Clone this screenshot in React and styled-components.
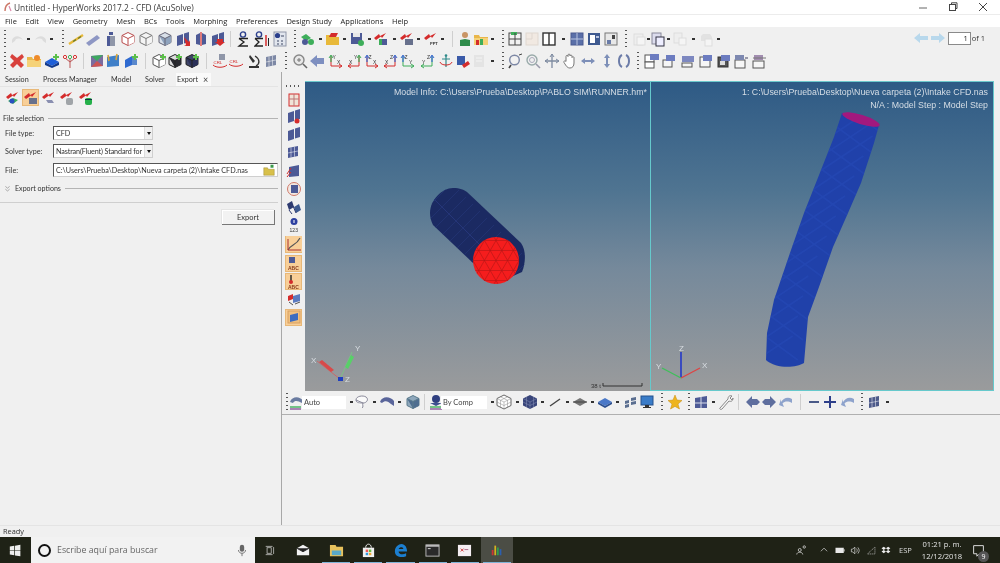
import React from "react";
import styled, { createGlobalStyle } from "styled-components";

const Global = createGlobalStyle`
  html, body { margin: 0; padding: 0; width: 1000px; height: 563px; overflow: hidden; background: #f0f0f0; }
  * { box-sizing: border-box; }
`;

const FONT = `"Open Sans", "Noto Sans", "Liberation Sans", sans-serif`;
const NARROW = `Lato, "Open Sans", "Liberation Sans", sans-serif`;

const Window = styled.div`
  width: 1000px; height: 563px; display: flex; flex-direction: column; overflow: hidden;
  font-family: ${FONT}; font-size: 8px; color: #2a2a2a; background: #f0f0f0; filter: blur(0.3px);
`;
const TitleBar = styled.div`
  height: 15px; flex: none; background: #fff; display: flex; align-items: center; border-bottom: 1px solid #ececec; padding-left: 4px;
`;
const TitleText = styled.span`font-size: 8.4px; color: #3a3a3a; margin-left: 2px; white-space: nowrap;`;
const WinControls = styled.div`margin-left: auto; margin-right: 2px; display: flex; align-items: center;`;
const WinBtn = styled.span`width: 30px; height: 14px; display: flex; align-items: center; justify-content: center;`;
const MenuBar = styled.div`
  height: 12px; flex: none; background: #fff; display: flex; align-items: center; padding-left: 5px; gap: 8.7px; font-size: 7.5px; color: #222;
`;
const MenuItem = styled.span`white-space: nowrap;`;
const ToolRow = styled.div`height: ${p => p.$h || 22}px; flex: none; display: flex; align-items: center; position: relative; padding-top: ${p => p.$nudge || 0}px;`;
const StripBox = styled.div`display: flex; flex-direction: ${p => (p.$col ? "column" : "row")}; align-items: center;`;
const Slot = styled.div`
  flex: none; display: flex; align-items: center; justify-content: center;
  ${p => (p.$col ? `height: ${p.$w}px; width: 20px;` : `width: ${p.$w}px; height: 18px;`)}
`;
const Grip = styled.span`
  display: block; width: 2px; height: 18px;
  background: repeating-linear-gradient(to bottom, #555 0 1.5px, transparent 1.5px 4px);
`;
const GripH = styled.span`
  display: block; width: 16px; height: 2px;
  background: repeating-linear-gradient(to right, #555 0 1.5px, transparent 1.5px 4px);
`;
const Sep = styled.span`display: block; width: 1px; height: 16px; background: #cfcfcf;`;
const DropDot = styled.span`display: block; width: 3px; height: 2px; background: #333;`;
const IconBox = styled.span`
  display: flex; width: 17px; height: 17px; align-items: center; justify-content: center; flex: none;
  background: ${p => (p.$on ? "#f8cf98" : "transparent")};
  box-shadow: ${p => (p.$on ? "inset 0 0 0 1px #e8b878" : "none")};
`;
const Pager = styled.div`
  margin-left: auto; margin-right: 15px; margin-top: -2px; display: flex; align-items: center; font-size: 7.5px; color: #333;
`;
const PagerInput = styled.span`
  width: 23px; height: 13px; background: #fff; border: 1px solid #8a8a8a; text-align: right; padding-right: 2px; line-height: 11px; margin: 0 1px 0 1px; color: #222;
`;

const Main = styled.div`flex: 1; min-height: 0; display: flex;`;
const LeftPanel = styled.div`
  width: 282px; flex: none; border-right: 1px solid #a8a8a8; display: flex; flex-direction: column; background: #f0f0f0; font-family: ${NARROW};
`;
const Tabs = styled.div`height: 14px; flex: none; display: flex; align-items: stretch; font-size: 7.2px; color: #333; padding-top: 1px;`;
const Tab = styled.div`
  display: flex; align-items: center; width: ${p => p.$w}px; padding-left: ${p => p.$pad}px; white-space: nowrap;
  background: ${p => (p.$on ? "#fafafa" : "transparent")};
`;
const TabClose = styled.span`margin-left: 5px; font-size: 9px; color: #444;`;
const PanelBody = styled.div`
  margin-right: 3px; flex: none; height: 117px; border-bottom: 1px solid #cfcfcf; display: flex; flex-direction: column;
`;
const IconRow = styled.div`display: flex; height: 22px; align-items: center; padding-left: 4px; border-top: 1px solid #e4e4e4; gap: 1.3px;`;
const GroupHead = styled.div`
  display: flex; align-items: center; height: 12px; margin-top: ${p => p.$mt}px; gap: 4px; font-size: 7.1px; color: #333; padding-left: ${p => p.$pad}px;
  &::after { content: ""; flex: 1; height: 1px; background: #b4b4b4; }
`;
const FieldRow = styled.div`display: flex; align-items: center; height: 14px; margin-top: ${p => p.$mt}px; padding-left: 5px; font-size: 7.2px;`;
const FieldLabel = styled.label`width: 48px; flex: none; color: #333;`;
const Combo = styled.div`
  width: ${p => p.$w}px; height: 14px; background: #fff; border: 1px solid #cfcfcf; border-top: 1px solid #555; border-left: 1px solid #555;
  display: flex; align-items: center; padding-left: 2px; color: #333; position: relative; white-space: nowrap; overflow: hidden;
`;
const ComboText = styled.span`flex: 1; overflow: hidden; letter-spacing: ${p => (p.$tight ? "-0.12px" : "normal")};`;
const ComboArrow = styled.span`
  width: 8px; height: 12px; flex: none; background: #f0f0f0; border-left: 1px solid #ddd; display: flex; align-items: center; justify-content: center;
  &::after { content: ""; border: 2.5px solid transparent; border-top: 3px solid #111; margin-top: 3px; }
`;
const BtnRow = styled.div`display: flex; justify-content: flex-end; padding: 7px 6px 0 0;`;
const Button = styled.button`
  width: 53px; height: 15px; padding: 0; background: #f2f2f2; border: 0; border-right: 1px solid #777; border-bottom: 1px solid #777;
  box-shadow: inset 1px 1px 0 #fff, -1px -1px 0 #e4e4e4; font: inherit; font-size: 7.5px; color: #333;
`;
const RightArea = styled.div`flex: 1; min-width: 0; display: flex; flex-direction: column; padding-top: 9px;`;
const CanvasRow = styled.div`height: 310px; flex: none; display: flex;`;
const SideTools = styled.div`width: 23px; flex: none; display: flex; flex-direction: column; align-items: center;`;
const Viewports = styled.div`
  width: 689px; flex: none; display: flex; position: relative; border-top: 1px solid #6cc8cc;
`;
const Viewport = styled.div`
  flex: 1 0 ${p => p.$w}px; max-width: ${p => p.$w}px; position: relative; overflow: hidden;
  background: linear-gradient(to bottom, #2e5a85 0%, #4f7491 35%, #75899b 60%, #9a9b9c 100%);
  border: ${p => (p.$active ? "1px solid #66c9cc" : "0")};
  border-top: 0;
`;
const InfoLines = styled.div`
  position: absolute; top: 4px; right: ${p => p.$r}px; text-align: right; color: #d6dee6; font-size: 8.8px; line-height: 13px; white-space: nowrap; font-family: "Liberation Sans", sans-serif;
`;
const Scene = styled.svg`position: absolute; left: 0; top: 0; display: block;`;
const BottomTools = styled.div`height: 22px; flex: none; display: flex; align-items: center; position: relative;`;
const ComboFlat = styled.span`
  display: flex; align-items: center; background: #fff; height: 13px; width: 100%; padding-left: 2px; font-size: 7.5px; color: #444; white-space: nowrap; font-family: ${NARROW};
`;
const BottomPanel = styled.div`flex: 1; border-top: 1px solid #b0b0b0; margin-top: 1px; background: #f0f0f0;`;
const StatusBar = styled.div`height: 12px; flex: none; padding-left: 3px; font-size: 7.4px; color: #333; line-height: 11px; border-top: 1px solid #e4e4e4;`;

const Taskbar = styled.div`
  height: 26px; flex: none; background: #1f2216; display: flex; align-items: stretch; color: #e8e8e8;
`;
const StartBtn = styled.div`width: 31px; flex: none; display: flex; align-items: center; justify-content: center;`;
const SearchBox = styled.div`
  width: 224px; flex: none; background: #f2f2f2; display: flex; align-items: center; padding: 0 6px 0 7px; color: #666; font-size: 8.8px;
`;
const SearchText = styled.span`margin-left: 6px; flex: 1; white-space: nowrap;`;
const TaskApps = styled.div`display: flex; align-items: stretch; margin-left: -1px;`;
const TaskApp = styled.div`
  width: ${p => p.$w || 32.2}px; flex: none; display: flex; align-items: center; justify-content: center; position: relative;
  background: ${p => (p.$active ? "#4b4d45" : "transparent")};
  ${p => p.$open ? `&::after { content: ""; position: absolute; left: 2px; right: 2px; bottom: 0; height: 1.5px; background: #7fb4d8; }` : ""}
`;
const Tray = styled.div`margin-left: auto; padding-right: 9px; display: flex; align-items: center;`;
const TrayItem = styled.div`
  width: ${p => p.$w}px; margin-left: ${p => p.$ml || 0}px; flex: none; display: flex; align-items: center; justify-content: center; position: relative; font-size: 7.5px; color: #ddd;
`;
const Clock = styled.div`
  width: 48px; flex: none; text-align: center; font-size: 7.6px; line-height: 12px; color: #e4e4e4; white-space: nowrap;
`;
const Badge = styled.span`
  position: absolute; left: 12px; top: 7px; width: 11px; height: 11px; border-radius: 50%; background: #555; color: #fff; font-size: 7px; line-height: 11px; text-align: center;
`;

/* ---------- icon drawings ---------- */
const P = "#4d5a96", PL = "#8e97c4", R = "#d42c2c", G = "#3eae5a", Y = "#e8b93a", GR = "#8f96a8", LT = "#dcdcdc", B = "#3a6ad0";
const cube = (s, f, f2) => (
  <>
    <path d="M8 1.5 14 4.5V11.5L8 14.5 2 11.5V4.5Z" fill={f} stroke={s} />
    <path d="M2 4.5 8 7.5 14 4.5V11.5L8 14.5Z" fill={f2 || f} />
    <path d="M2 4.5 8 7.5 14 4.5M8 7.5V14.5" fill="none" stroke={s} />
  </>
);
const plus = <path d="M11 1h2v2h2v2h-2v2h-2V5H9V3h2z" fill="#5cbf4a" />;
const red = <path d="M1 7 6 3 7 5 13 2 9 7 8 5.5 3 9Z" fill={R} />;
const panel = f => <path d="M2 5 8 3V13L2 15ZM9 2.5 14 1V11L9 12.5Z" fill={f} />;
const mesh3 = c => <><path d="M2 4 12 2V12L2 14Z" fill={c} /><path d="M5 3.5V13.4M8.5 2.8V12.7M2 9 12 7" stroke="#fff" strokeWidth=".5" /></>;
const Tiny = ({ x, y, c = "#333", s = 5, w = 400, children }) => (
  <text x={x} y={y} fontSize={s} fontWeight={w} fill={c} fontFamily="Liberation Sans, sans-serif">{children}</text>
);
const axis = (flip, up, right, a, b) => (
  <>
    <path d={flip ? "M13 3V13H2" : "M3 3V13H14"} fill="none" stroke={right} />
    <path d={flip ? "M13 3V9" : "M3 3V9"} stroke={up} strokeWidth="1.2" />
    <path d={flip ? "M11 5 13 2 15 5" : "M1 5 3 2 5 5"} fill="none" stroke={up} />
    <path d={flip ? "M5 11 2 13 5 15" : "M11 11 14 13 11 15"} fill="none" stroke={right} />
    <Tiny x={flip ? 8 : 4.5} y="6">{a}</Tiny>
    <Tiny x={flip ? 3 : 9} y="11">{b}</Tiny>
  </>
);
const folderIc = (
  <>
    <path d="M1 4h5l1 2h8v8H1z" fill="#e9b64a" />
    <path d="M1 7h14v7H1z" fill="#f5d278" />
  </>
);
const Icons = {
  undo: <path d="M3 9C5 4 11 4 14 9 10 7 7 7 6 10L3 12Z" fill={LT} />,
  redo: <path d="M13 9C11 4 5 4 2 9 6 7 9 7 10 10L13 12Z" fill={LT} />,
  lineY: <><path d="M1 13 15 4" stroke={Y} strokeWidth="2.4" /><path d="M5 10.5 8 8.7M10 7.5 13 5.5" stroke="#6a7a2a" strokeWidth="1.4" /></>,
  cyl: <path d="M1 12 12 4 15 7 4 15Z" fill={PL} />,
  bottle: <><rect x="6" y="1" width="4" height="3" fill={P} /><path d="M4 5h8v10H4z" fill={GR} /><path d="M4 5h3v10H4z" fill={P} /></>,
  cubeR: cube("#b84a4a", "#fff"),
  cubeG: cube("#777", "#f4f4f4"),
  cubeS: cube("#667", "#d8dfe8", "#8fa3bd"),
  faceR: <>{panel(P)}<path d="M9 6 14 11 15 9V15H9L11 14Z" fill={R} /></>,
  split: <><path d="M3 4 7 2V14L3 13Z" fill={P} /><path d="M9 2 13 4V13L9 14Z" fill={P} /><path d="M8 1V15" stroke={R} strokeWidth="1.2" /></>,
  faceD: <>{panel(P)}<path d="M7 8h6v3h2l-5 4-5-4h2z" fill={R} /></>,
  sigma: <><circle cx="7" cy="3.5" r="2.6" fill="none" stroke="#2b3f8c" strokeWidth="1.4" /><path d="M3 7.5H12M3 7.5 8 11 3 15H12" fill="none" stroke="#222" strokeWidth="1.3" /></>,
  sigma2: <><circle cx="5" cy="3.5" r="2.6" fill="none" stroke="#2b3f8c" strokeWidth="1.4" /><path d="M1 7.5H9M1 7.5 5 11 1 15H9" fill="none" stroke="#222" strokeWidth="1.3" /><path d="M12 4V15" stroke={R} strokeWidth="1.5" /><path d="M14.5 7V15" stroke="#222" /></>,
  calc: <><rect x="2" y="1" width="12" height="14" fill="#e2e6ee" stroke={GR} /><circle cx="5.5" cy="4.5" r="2.6" fill="#2b3f8c" /><path d="M5 9h2v2H5zM9 9h2v2H9zM5 12h2v2H5zM9 12h2v2H9zM9 4h3v2H9z" fill={GR} /></>,
  impC: <><path d="M1 6 6 3 11 7 6 10Z" fill={G} /><circle cx="5" cy="11" r="3" fill={P} /><circle cx="11" cy="11" r="3" fill={G} /></>,
  impF: <><path d="M2 4h6l1 2h6v8H2z" fill={Y} /><path d="M7 2h7l-2 4H5z" fill={R} /></>,
  save: <><rect x="2" y="2" width="11" height="11" fill={P} /><rect x="4" y="2" width="7" height="4" fill="#e8e8e8" /><circle cx="12" cy="12" r="3" fill={G} /></>,
  expA: <>{red}<path d="M3 11 8 8 13 10 8 14Z" fill={G} /><circle cx="7" cy="11" r="2.5" fill="#2a50c0" /></>,
  expB: <>{red}<path d="M6 8h8v6H6z" fill="#67708c" /></>,
  expC: <>{red}<path d="M5 10h6l2 3H7z" fill="#8a8fb0" /></>,
  expD: <>{red}<rect x="7" y="8" width="7" height="7" rx="2" fill="#a0a4a8" /></>,
  expE: <>{red}<rect x="7" y="8" width="7" height="7" rx="2" fill="#25b04a" /><path d="M7 9.5H14" stroke="#134" /></>,
  expG: <>{red}<path d="M6 8h8v6H6z" fill={G} /><path d="M9 8h5v6H9z" fill={P} /></>,
  expH: <>{red}<Tiny x="7" y="14" s={4} w={700}>PPT</Tiny></>,
  person: <><circle cx="8" cy="4" r="3" fill="#c99566" /><path d="M3 15V9L8 8 13 9V15Z" fill="#2e8b4a" /></>,
  folderC: <>{folderIc}<path d="M3 9h3v5H3z" fill={R} /><path d="M7 8h3v6H7z" fill={G} /></>,
  winT: <><rect x="2" y="2" width="12" height="12" fill="#f2f2f2" stroke="#444" /><rect x="4" y="1" width="6" height="3" fill={G} /><path d="M8 2v12M2 8h12" stroke="#444" /></>,
  gridG: <><rect x="2" y="2" width="12" height="12" fill="#f1e9e2" stroke="#dfd7d0" /><path d="M8 2v6H2" stroke="#dfd7d0" fill="none" /></>,
  win2: <><rect x="2" y="2" width="12" height="12" fill="#fff" stroke="#333" strokeWidth="1.4" /><path d="M8 2v12" stroke="#333" strokeWidth="1.4" /></>,
  win4: <><rect x="2" y="2" width="12" height="12" fill="#5a6fa8" stroke="#4a5a90" /><path d="M8 2v12M2 8h12" stroke="#b8c4e0" /></>,
  winS: <><rect x="2" y="2" width="12" height="12" fill="#3f5a90" /><rect x="4" y="4" width="5" height="8" fill="#fff" /><rect x="10" y="5" width="3" height="2" fill="#b8c4e0" /></>,
  winQ: <><rect x="2" y="2" width="12" height="12" fill="#e8e8e8" stroke="#777" /><path d="M4 9h4v4H4z" fill="#6a7ca8" /><path d="M9 4h3v4H9z" fill="#444" /></>,
  pgA: <><rect x="3" y="3" width="9" height="11" fill="#eee" stroke="#ddd" /><rect x="6" y="6" width="8" height="8" fill="#f5f5f5" stroke="#ddd" /></>,
  pgB: <><rect x="2" y="2" width="9" height="11" fill="#dde" stroke="#889" /><rect x="6" y="6" width="8" height="9" fill="#eef" stroke="#334" /></>,
  pgC: <><rect x="2" y="2" width="8" height="10" fill="#eee" stroke="#ddd" /><rect x="7" y="7" width="7" height="7" fill="#f5f5f5" stroke="#ddd" /></>,
  pgD: <><path d="M5 3h7l2 3v4H3V5z" fill="#e2e2e2" /><rect x="7" y="8" width="7" height="7" fill="#f5f5f5" stroke="#ddd" /></>,
  xRed: <path d="M3 1 8 5 13 1 15 4 11 8 15 12 12 15 8 11 4 15 1 12 5 8 1 4Z" fill="#d8413c" />,
  folderO: <>{folderIc}<circle cx="11" cy="5" r="3" fill="#ee8b2a" /></>,
  folderF: <><path d="M1 5h5l1 2h8v8H1z" fill="#d8c04a" stroke="#8a7a20" strokeWidth=".5" /><path d="M10 1h4v4h-4z" fill="#3a9a4a" /></>,
  cubeB: <><path d="M1 9 8 5 15 9 8 13Z" fill="#1f5fd8" /><path d="M1 9V12L8 15 15 12V9L8 13Z" fill="#143a8c" />{plus}</>,
  tree: <><path d="M8 6V15M8 9 3 5M8 9 13 5" fill="none" stroke="#b55" /><circle cx="3" cy="4" r="1.6" fill="#fff" stroke={R} /><circle cx="13" cy="4" r="1.6" fill="#fff" stroke={R} /><circle cx="8" cy="4" r="1.6" fill="#fff" stroke={G} /></>,
  m1: <><path d="M2 3 14 2V13L2 14Z" fill="#7a6ca0" /><path d="M2 3 8 8 14 2" fill="#3ea860" /><path d="M2 14 8 8 14 13Z" fill="#c55" /></>,
  m2: <><path d="M2 4 14 2V13L2 14Z" fill="#3f7fc8" /><path d="M3 2 4 8M12 1 11 7" stroke="#d8a53a" strokeWidth="1.6" /></>,
  m3: <><path d="M2 7 9 3V12L2 15Z" fill="#2f6ad0" /><path d="M9 3 14 6V12L9 12Z" fill="#5a88cc" />{plus}</>,
  cubeP: <>{cube("#555", "#fff")}{plus}</>,
  cubeQ: <>{cube("#222", "#ddd", "#2a2a30")}{plus}</>,
  cubeD: <>{cube("#222", "#3e4468", "#2a3058")}{plus}</>,
  crl1: <><rect x="7" y="1" width="6" height="6" fill={GR} /><Tiny x="1.5" y="11" c={R} s={4.4}>CRL</Tiny><path d="M1 12C4 15 12 15 15 12" fill="none" stroke={R} /></>,
  crl2: <><Tiny x="1.5" y="10" c={R} s={4.4}>CRL</Tiny><path d="M1 11C4 14 12 14 15 11" fill="none" stroke={R} /></>,
  scope: <><path d="M4 2 9 8 7 10 3 4Z" fill="#333" /><path d="M9 3C14 6 14 11 10 13" fill="none" stroke="#333" strokeWidth="1.4" /><path d="M3 14H13" stroke="#333" strokeWidth="2" /></>,
  meshG: mesh3("#7d88a5"),
  zoomG: <><circle cx="7" cy="7" r="5" fill="#e8e8e8" stroke="#888" strokeWidth="1.4" /><path d="M11 11 15 15" stroke="#666" strokeWidth="1.6" /><path d="M5 7h4M7 5v4" stroke="#777" /></>,
  arrowLB: <path d="M1 8 8 2V5H15V11H8V14Z" fill="#7e8fc0" />,
  axYX: axis(false, G, R, "Y", "X"),
  axXY: axis(true, G, R, "Y", "X"),
  axZX: axis(false, B, R, "Z", "X"),
  axXZ: axis(true, B, R, "Z", "X"),
  axZY: axis(false, B, G, "Z", "Y"),
  axYZ: axis(true, B, G, "Z", "Y"),
  anchor: <><path d="M8 3V14M4 6H12" stroke="#2f8a8a" strokeWidth="1.2" /><path d="M2 9C3 13 13 13 14 9" fill="none" stroke={R} /><circle cx="8" cy="2.5" r="1.3" fill="#2f8a8a" /></>,
  flagB: <><path d="M2 3H10V12H2Z" fill="#3a5aa8" /><path d="M7 12 13 8 15 11 9 15Z" fill={R} /></>,
  pgG: <><rect x="3" y="2" width="10" height="12" fill="#e4e4e4" /><path d="M5 5h6M5 8h6" stroke="#f4f4f4" /></>,
  zoomB: <><circle cx="6.5" cy="7" r="4.8" fill="#f2f2f2" stroke="#7d88a5" strokeWidth="1.4" /><path d="M3 12 1 15" stroke="#444" strokeWidth="1.6" /><path d="M11 2 14 1" stroke="#444" /></>,
  zoomC: <><circle cx="7" cy="7" r="5" fill="#f0f0f0" stroke="#9aa" strokeWidth="1.4" /><circle cx="7" cy="7" r="2.5" fill="none" stroke="#aab" /><path d="M11 11 15 15" stroke="#99a" strokeWidth="1.6" /></>,
  cross: <><path d="M8 1V15M1 8H15" stroke="#7d8aa0" strokeWidth="1.3" /><path d="M8 1 6 4M8 1l2 3M1 8l3-2M1 8l3 2M15 8l-3-2M15 8l-3 2" stroke="#7d8aa0" fill="none" /></>,
  hand: <path d="M4 7V3.5C4 2 6 2 6 3.5V2C6 .8 8 .8 8 2V3C8 1.8 10 1.8 10 3V4.5C10 3.5 12 3.5 12 4.5V10C12 13 10.5 15 8 15 5.5 15 4.5 13.5 2 9.5 1.5 8 3 7 4 8.5Z" fill="#fff" stroke="#777" />,
  arrH: <path d="M1 8 5 5V7H11V5L15 8 11 11V9H5V11Z" fill="#7d8fb8" />,
  arrV: <path d="M8 1 11 5H9V11H11L8 15 5 11H7V5H5Z" fill="#7d8fb8" />,
  rot: <><path d="M6 2C2 4 2 12 6 14" fill="none" stroke="#6c7ca8" strokeWidth="2" /><path d="M10 2C14 4 14 12 10 14" fill="none" stroke="#6c7ca8" strokeWidth="2" /></>,
  vA: <><rect x="1" y="2" width="9" height="7" fill="#fff" stroke="#555" /><rect x="6" y="1" width="9" height="6" fill="#6c7cc0" /><rect x="1" y="9" width="9" height="6" fill="#fff" stroke="#555" /></>,
  vB: <><rect x="2" y="7" width="9" height="7" fill="#f6f6f6" stroke="#555" /><rect x="5" y="2" width="9" height="6" fill="#6c7cc0" /></>,
  vC: <><rect x="2" y="3" width="12" height="6" fill="#7d88c0" /><rect x="2" y="10" width="10" height="4" fill="#f6f6f6" stroke="#555" /></>,
  vD: <><rect x="2" y="4" width="10" height="10" fill="#f6f6f6" stroke="#555" /><rect x="5" y="2" width="9" height="6" fill="#6c7cc0" /></>,
  vE: <><rect x="2" y="4" width="10" height="10" fill="#555" stroke="#333" /><rect x="5" y="2" width="9" height="6" fill="#6c7cc0" /><rect x="4" y="8" width="5" height="4" fill="#ddd" /></>,
  vF: <><rect x="2" y="7" width="10" height="8" fill="#f6f6f6" stroke="#555" /><rect x="2" y="2" width="9" height="5" fill="#7d88b0" /><path d="M12 4h3v2h-3z" fill="#99a" /></>,
  vG: <><rect x="2" y="8" width="11" height="7" fill="#f6f6f6" stroke="#555" /><rect x="3" y="2" width="9" height="5" fill="#a28db0" /><path d="M2 5H15" stroke="#777" /></>,
  arrBlueL: <path d="M1 8 7 3V6H15V10H7V13Z" fill="#b8d8ec" />,
  arrBlueR: <path d="M15 8 9 3V6H1V10H9V13Z" fill="#b8d8ec" />,
  sd1: <><rect x="3" y="2" width="10" height="12" fill="#f0e4d8" stroke={R} /><path d="M3 7H13M8 2V14" stroke="#b77" /></>,
  sd2: <>{panel(P)}<circle cx="11" cy="13" r="2.5" fill={R} /></>,
  sd3: <>{panel(P)}</>,
  sd4: <>{mesh3(P)}</>,
  sd5: <><path d="M3 4 13 2V13L3 14Z" fill={P} /><path d="M1 11 5 5M1 14l4-5" stroke={R} /></>,
  sd6: <><circle cx="8" cy="8" r="6.5" fill="#f2e8e2" stroke="#d07a6a" /><rect x="5" y="4" width="7" height="8" fill={P} /></>,
  sd7: <><path d="M1 5 6 2 8 8 3 11Z" fill="#2e3a70" /><path d="M8 8 13 5 15 11 10 14Z" fill="#3e5a90" /><path d="M3 11 6 15M10 14 7 7" stroke="#2e3a70" /></>,
  info: <><circle cx="8" cy="4.5" r="3.5" fill="#2c3fa0" /><path d="M8 3V6" stroke="#fff" /><Tiny x="3.6" y="14.5" s={5}>123</Tiny></>,
  curve: <><rect width="16" height="16" fill="#f8cf98" /><path d="M2 14C5 8 10 10 14 2" fill="none" stroke="#555" strokeWidth="1.2" /><path d="M2 3V14H15" fill="none" stroke="#a33" /></>,
  abcA: <><rect x="3" y="2" width="6" height="6" fill={P} /><Tiny x="2" y="14.5" c="#8a3a1a" s={5} w={700}>ABC</Tiny></>,
  abcB: <><path d="M5 1V8" stroke="#222" strokeWidth="1.4" /><circle cx="5" cy="8" r="2" fill={R} /><Tiny x="2" y="14.5" c="#8a3a1a" s={5} w={700}>ABC</Tiny></>,
  ctr: <><path d="M2 5 7 3V8L2 10Z" fill={R} /><path d="M7 5 14 3V10L7 12Z" fill="#5a7ac0" /><path d="M3 11 7 14M9 13 14 11" stroke="#555" /></>,
  planeO: <><rect x="2" y="2" width="12" height="12" fill="#f0c080" stroke="#d8a060" /><path d="M4 6 12 4V11L4 13Z" fill="#3c6cc0" /></>,
  auto: <><path d="M1 8C3 2 11 2 14 7L13 9C9 7 6 6 4 9Z" fill="#6a7ba0" /><path d="M1 13H12" stroke={G} strokeWidth="1.4" /><path d="M1 15H12" stroke="#7a3a8a" strokeWidth="1.2" /></>,
  lasso: <path d="M1 6C1 2 8 1 11 3 14 5 12 9 8 9 7 11 9 13 7 14M8 9C5 9 1 9 1 6Z" fill="#fafafa" stroke="#889" />,
  surf: <path d="M1 8C3 2 11 2 15 7V12L12 10C9 7 6 6 3 9Z" fill="#59659a" />,
  cubeF: cube("#5a7a8c", "#8fa8bc", "#4f6e90"),
  byComp: <><circle cx="8" cy="5" r="4" fill="#2f3f80" /><path d="M2 9H14L8 12Z" fill="#3f5090" /><path d="M2 13H14" stroke={G} strokeWidth="1.4" /><path d="M2 15H14" stroke="#7a3a8a" strokeWidth="1.2" /></>,
  cubeW: <><path d="M8 1 15 4.5V11.5L8 15 1 11.5V4.5Z" fill="#fff" stroke="#666" /><path d="M1 4.5 8 8 15 4.5M8 8V15M4.5 2.8 11.5 6.3M11.5 2.8 4.5 6.3M4.5 6.3V13M11.5 6.3V13M1 8 8 11.5 15 8" fill="none" stroke="#888" strokeWidth=".5" /></>,
  cubeK: <><path d="M8 1 15 4.5V11.5L8 15 1 11.5V4.5Z" fill="#39457a" /><path d="M1 4.5 8 8 15 4.5M8 8V15M1 8 8 11.5 15 8M4.5 3V13M11.5 3V13" fill="none" stroke="#8a94b8" strokeWidth=".5" /></>,
  lineK: <path d="M3 12 13 5" stroke="#444" strokeWidth="1.4" />,
  planeK: <><path d="M1 8 8 4 15 8 8 12Z" fill="#757575" /><path d="M1 8H15" stroke="#444" /></>,
  diamond: <><path d="M1 8 8 4 15 8 8 12Z" fill="#4a78c8" /><path d="M1 8V10L8 14 15 10V8L8 12Z" fill="#2b4f90" /></>,
  tiles: <path d="M2 7 6 6V9L2 10ZM2 11 6 10V13L2 14ZM8 4 13 3V6L8 7ZM8 8 13 7V10L8 11Z" fill="#5a6e90" />,
  monitor: <><rect x="2" y="2" width="12" height="9" fill="#3a7cc8" stroke="#24508c" /><path d="M6 11h4v2h2v1H4v-1h2z" fill="#333" /></>,
  star: <path d="M8 1 10 6 15 6.5 11 10 12.5 15 8 12.4 3.5 15 5 10 1 6.5 6 6Z" fill="#eeb41e" stroke="#c48a10" strokeWidth=".5" />,
  winB: <><path d="M2 4 14 2V14L2 14Z" fill="#4d5a96" /><path d="M8 3V14M2 9H14" stroke="#d8dcea" /></>,
  wrench: <path d="M2 14 10 5C10 3 11 1 14 2L12 4 14 6 15 4C15 7 13 8 11 7L4 15C3 16 1 15 2 14Z" fill="#f4f4f4" stroke="#888" />,
  arrLP: <path d="M1 8 7 2V5H12L15 8 12 11H7V14Z" fill="#5e6e9e" />,
  arrRP: <path d="M15 8 9 2V5H4L1 8 4 11H9V14Z" fill="#5e6e9e" />,
  curveB: <path d="M14 5C9 2 5 5 3 8V5L1 11 6 13 4.5 9.5C7 7 10 7 14 9Z" fill="#8ea3cc" />,
  minus: <path d="M3 7H13V9H3Z" fill="#4a5a88" />,
  plusB: <path d="M7 2H9V7H14V9H9V14H7V9H2V7H7Z" fill="#2d3f8a" />,
  meshB: mesh3("#4d5a8a"),
};

const Ic = ({ n, s = 16, on }) => (
  <IconBox $on={on}>
    <svg width={s} height={s} viewBox="0 0 16 16" strokeWidth="1">{Icons[n]}</svg>
  </IconBox>
);

function sizes(items, start) {
  const edge = i => {
    const [, c, o] = items[i];
    const next = items[i + 1];
    if (o && o.w) return c + o.w / 2;
    if (next[2] && next[2].w) return next[1] - next[2].w / 2;
    return (c + next[1]) / 2;
  };
  return items.map(([, c], i) => {
    const a = i === 0 ? start : edge(i - 1);
    const b = i === items.length - 1 ? c + (c - a) : edge(i);
    return b - a;
  });
}
const Strip = ({ items, start, col }) => {
  const w = sizes(items, start);
  return (
    <StripBox $col={col}>
      {items.map(([n, , o], i) => (
        <Slot key={i} $w={w[i]} $col={col}>
          {n === "grip" ? (col ? <GripH /> : <Grip />) : n === "sep" ? <Sep /> : n === "dot" ? <DropDot /> : o && o.text ? <ComboFlat>{o.text}</ComboFlat> : <Ic n={n} on={o && o.on} />}
        </Slot>
      ))}
    </StripBox>
  );
};

const row1 = [["grip",4],["undo",17],["dot",28],["redo",41],["dot",52],["grip",62],["lineY",74],["cyl",93],["bottle",111],["cubeR",128],["cubeG",146],["cubeS",165],["faceR",183],["split",201],["faceD",220],["sep",231],["sigma",241],["sigma2",262],["calc",281],["grip",295],["impC",308],["dot",320],["impF",332],["dot",344],["save",357],["dot",369],["expG",381],["dot",394],["expB",407],["dot",418],["expH",432],["dot",443],["sep",451],["person",463],["folderC",483],["dot",493],["grip",502],["winT",513],["gridG",533],["win2",550],["dot",563],["win4",576],["winS",593],["winQ",613],["grip",626],["pgA",640],["dot",648],["pgB",658],["dot",668],["pgC",680],["dot",693],["pgD",707],["dot",718]];
const row2 = [["grip",4],["xRed",16],["folderO",33],["cubeB",52],["tree",71],["sep",84],["m1",95],["m2",113],["m3",132],["sep",146],["cubeP",157],["cubeQ",175],["cubeD",193],["sep",206],["crl1",219],["crl2",236],["scope",254],["meshG",273],["grip",287],["zoomG",298],["arrowLB",317],["axYX",335],["axXY",355],["axZX",372],["axXZ",390],["axZY",408],["axYZ",427],["anchor",447],["flagB",463],["pgG",480],["dot",493],["grip",502],["zoomB",515],["zoomC",533],["cross",552],["hand",570],["arrH",588],["arrV",607],["rot",625],["grip",638],["vA",650],["vB",668],["vC",688],["vD",706],["vE",724],["vF",741],["vG",759]];
const side = [["grip",3],["sd1",18],["sd2",35],["sd3",53],["sd4",71],["sd5",90],["sd6",108],["sd7",126],["info",144],["curve",163,{on:true}],["abcA",182,{on:true}],["abcB",201,{on:true}],["ctr",218],["planeO",236,{on:true}]];
const bottom = [["grip",287],["auto",297],["Auto",325,{text:"Auto",w:44}],["dot",350],["lasso",364],["dot",376],["surf",387],["dot",401],["cubeF",413],["sep",427],["byComp",435],["By Comp",465,{text:"By Comp",w:46}],["dot",491],["cubeW",505],["dot",519],["cubeK",530],["dot",544],["lineK",555],["dot",569],["planeK",580],["dot",594],["diamond",605],["dot",618],["tiles",631],["monitor",649],["grip",663],["star",676],["grip",690],["winB",702],["dot",715],["wrench",727],["sep",740],["arrLP",752],["arrRP",770],["curveB",789],["sep",801],["minus",813],["plusB",831],["curveB",850],["grip",863],["meshB",876],["dot",888]];

function capLines() {
  const out = [];
  const cx = 496, cy = 260.5, r = 23.5;
  const step = 11.5;
  for (let k = -3; k <= 3; k++) {
    const d = k * step * 0.87;
    [0, 60, 120].forEach(a => {
      const t = (a * Math.PI) / 180;
      const nx = -Math.sin(t), ny = Math.cos(t);
      const h = Math.sqrt(Math.max(0, r * r - d * d));
      if (h > 0) out.push(`M${cx + nx * d - Math.cos(t) * h} ${cy + ny * d - Math.sin(t) * h}L${cx + nx * d + Math.cos(t) * h} ${cy + ny * d + Math.sin(t) * h}`);
    });
  }
  return out.join("");
}
function runnerMesh() {
  const out = [];
  for (let i = -2; i < 14; i++) {
    const x = 425 + i * 7, y = 190 + i * 7;
    out.push(`M${x} ${y + 34}L${x + 34} ${y}M${x} ${y}L${x + 40} ${y + 40}`);
  }
  return out.join("");
}
const RUNNER = "M430 213C430 200 442 188 453 188 460 188 464 190 467 192L521 243C526 250 526 262 522 272L500 282 473 263 433 225C431 221 430 217 430 213Z";

const LeftScene = () => (
  <Scene width="344" height="309" viewBox="305 82 344 309">
    <clipPath id="runner"><path d={RUNNER} /></clipPath>
    <path d={RUNNER} fill="#1b2a62" />
    <path d={runnerMesh()} stroke="#26387a" strokeWidth=".6" fill="none" clipPath="url(#runner)" />
    <ellipse cx="496" cy="260.5" rx="23" ry="23.5" fill="#f51d1d" />
    <clipPath id="cap"><ellipse cx="496" cy="260.5" rx="23" ry="23.5" /></clipPath>
    <path d={capLines()} stroke="#b01818" strokeWidth=".6" clipPath="url(#cap)" />
    <path d="M340 379 317 361" stroke="#c86a6a" />
    <path d="M331 372 319 362 322 360 334 370Z" fill="#d84a4a" />
    <path d="M340 379 352 352" stroke="#7cc088" />
    <path d="M345 367 351 355 354 357 348 369Z" fill="#58d068" />
    <rect x="338" y="377" width="5" height="4" fill="#1f3fc0" />
    <g fill="#d8dde2" fontSize="8" fontFamily="Liberation Sans, sans-serif">
      <text x="311" y="363">X</text>
      <text x="355" y="351">Y</text>
      <text x="345" y="382">Z</text>
    </g>
    <path d="M603 383V386H642V383" fill="none" stroke="#333" />
    <text x="591" y="388" fontSize="6" fill="#333" fontFamily="Liberation Sans, sans-serif">38 t</text>
  </Scene>
);

const TUBE = "M841 113 878 125 873 143 860 183 847 213 832 247 818 287 807 317 803 363C795 368 775 369 765 360L766 333 773 300 790 250 803 213 820 170 833 137Z";
function tubeFacets() {
  const out = [];
  for (let i = 0; i < 13; i++) {
    const y = 112 + i * 20;
    const x = 890 - i * 9.2 - (i > 9 ? (i - 9) * -4 : 0);
    out.push(`M${x - 60} ${y + 24}L${x} ${y - 16}M${x - 60} ${y - 16}L${x} ${y + 28}`);
  }
  return out.join("");
}
const RightScene = () => (
  <Scene width="343" height="309" viewBox="650 82 343 309">
    <clipPath id="tube"><path d={TUBE} /></clipPath>
    <path d={TUBE} fill="#2041aa" />
    <path d={tubeFacets()} stroke="#2c50c0" strokeWidth="1.6" fill="none" opacity=".35" clipPath="url(#tube)" />
    <ellipse cx="860" cy="119.5" rx="19.5" ry="4.6" transform="rotate(17 860 119.5)" fill="#a2197e" />
    <path d="M680 378 680 352" stroke="#2438c8" strokeWidth="1.6" />
    <path d="M680 378 699 368" stroke="#d44" strokeWidth="1.4" />
    <path d="M680 378 661 368" stroke="#3fbf5a" strokeWidth="1.4" />
    <g fill="#d8dde2" fontSize="8" fontFamily="Liberation Sans, sans-serif">
      <text x="678" y="351">Z</text>
      <text x="655" y="369">Y</text>
      <text x="701" y="368">X</text>
    </g>
  </Scene>
);

const TB = {
  win: <path d="M1 3 6.5 2.2V7.6H1ZM7.4 2 14 1V7.6H7.4ZM1 8.4H6.5V13.8L1 13ZM7.4 8.4H14V15L7.4 14Z" fill="#eee" />,
  mic: <><rect x="5.5" y="2" width="5" height="8" rx="2.5" fill="#666" /><path d="M4 8C4 13 12 13 12 8M8 12V15" stroke="#666" fill="none" /></>,
  tv: <><rect x="3" y="4" width="6" height="8" fill="none" stroke="#ddd" /><path d="M1 2H11M1 14H11M12.5 3V13" stroke="#ddd" /></>,
  mail: <><path d="M1 6 8 2 15 6V14H1Z" fill="#f2f2f2" /><path d="M1 6 8 10 15 6" fill="#222" stroke="#222" /></>,
  folder: <><path d="M1 2H7L8 4H15V14H1Z" fill="#e8c25c" /><path d="M3 8H13V13H3Z" fill="#59a8c8" /></>,
  store: <><path d="M2 5H14V15H2Z" fill="#f0f0f0" /><path d="M5 5C5 0 11 0 11 5" fill="none" stroke="#f0f0f0" /><rect x="5" y="7" width="2.6" height="2.6" fill="#e55" /><rect x="8.4" y="7" width="2.6" height="2.6" fill="#6b4" /><rect x="5" y="10.4" width="2.6" height="2.6" fill="#39d" /><rect x="8.4" y="10.4" width="2.6" height="2.6" fill="#ea3" /></>,
  edge: <path d="M2 9C2 4 6 1 9 1 13 1 15 5 15 9H6C6 12 10 13 14 11V14C9 16 2 15 2 9ZM6 6.5H11C11 4 7 4 6 6.5Z" fill="#1c7fd0" />,
  term: <><rect x="1" y="2" width="14" height="12" fill="#2a2a2a" stroke="#bbb" /><rect x="1" y="2" width="14" height="2" fill="#bbb" /><path d="M3 6H6" stroke="#ddd" /></>,
  app: <><rect x="1" y="2" width="14" height="12" fill="#f4eef2" /><path d="M4 6 7 9M7 6 4 9" stroke="#c33" /><path d="M8 7H12" stroke="#a68" /></>,
  hw: <><path d="M3 8V14" stroke="#c33" strokeWidth="2" /><path d="M6 3V14" stroke="#d4b020" strokeWidth="2" /><path d="M9 5V14" stroke="#2fa04a" strokeWidth="2" /><path d="M12 7V14" stroke="#2b5fb0" strokeWidth="2" /></>,
  ppl: <><circle cx="5" cy="8" r="2" fill="none" stroke="#ddd" /><path d="M1 14C1 10 9 10 9 14" fill="none" stroke="#ddd" /><circle cx="11" cy="4" r="1.6" fill="none" stroke="#ddd" /></>,
  chev: <path d="M3 10 8 5 13 10" fill="none" stroke="#ddd" strokeWidth="1.1" />,
  batt: <><rect x="2" y="5" width="11" height="7" fill="#e8e8e8" /><rect x="13" y="7" width="1" height="3" fill="#e8e8e8" /></>,
  vol: <><path d="M2 6H4L7 3V13L4 10H2Z" fill="none" stroke="#ddd" /><path d="M9 5C11 7 11 9 9 11M11.5 3.5C14 7 14 9 11.5 12.5" fill="none" stroke="#ddd" /></>,
  wifi: <path d="M2 13 13 3V13Z" fill="none" stroke="#bbb" strokeDasharray="2 1" />,
  drop: <path d="M4 2 8 5 4 8 8 11 4 14 0 11 4 8 0 5ZM12 2 16 5 12 8 16 11 12 14 8 11 12 8 8 5Z" fill="#eee" transform="scale(.88) translate(1 1)" />,
  note: <path d="M2 2H14V12H9L6 15V12H2Z" fill="none" stroke="#ddd" strokeWidth="1.2" />,
  min: <path d="M1 6H9" stroke="#666" />,
  max: <><rect x="1.5" y="2.5" width="6" height="6" fill="none" stroke="#444" /><path d="M3.5 2.5V.8H9V6.5H7.5" fill="none" stroke="#444" /></>,
  close: <path d="M1 1 9 9M9 1 1 9" stroke="#444" />,
  dbl: <path d="M2 2 5 4.5 8 2M2 6 5 8.5 8 6" fill="none" stroke="#888" />,
};
const Tb = ({ n, s = 16, v = 16 }) => <svg width={s} height={s} viewBox={`0 0 ${v} ${v}`}>{TB[n]}</svg>;

const tabs = [["Session", 42, 5], ["Process Manager", 69, 1], ["Model", 34, 0], ["Solver", 31, 0]];
const menus = ["File", "Edit", "View", "Geometry", "Mesh", "BCs", "Tools", "Morphing", "Preferences", "Design Study", "Applications", "Help"];
const SearchCircle = styled.span`width: 13px; height: 13px; border-radius: 50%; border: 2px solid #111; flex: none;`;

export default function App() {
  return (
    <Window>
      <Global />
      <TitleBar>
        <svg width="8" height="10" viewBox="0 0 8 10"><path d="M1 9C1 4 3 2 6 1" fill="none" stroke="#c76" strokeWidth="1.4" /><path d="M5 4 7 9" stroke="#d8a" strokeWidth="1.2" /></svg>
        <TitleText>Untitled - HyperWorks 2017.2 - CFD (AcuSolve)</TitleText>
        <WinControls>
          <WinBtn><Tb n="min" s={10} v={10} /></WinBtn>
          <WinBtn><Tb n="max" s={10} v={10} /></WinBtn>
          <WinBtn><Tb n="close" s={10} v={10} /></WinBtn>
        </WinControls>
      </TitleBar>
      <MenuBar>
        {menus.map(m => <MenuItem key={m}>{m}</MenuItem>)}
      </MenuBar>
      <ToolRow $nudge={2}>
        <Strip items={row1} start={0} />
        <Pager>
          <Ic n="arrBlueL" />
          <Ic n="arrBlueR" />
          <PagerInput>1</PagerInput>
          of 1
        </Pager>
      </ToolRow>
      <ToolRow $h={23}>
        <Strip items={row2} start={0} />
      </ToolRow>
      <Main>
        <LeftPanel>
          <Tabs>
            {tabs.map(([t, w, p]) => <Tab key={t} $w={w} $pad={p}>{t}</Tab>)}
            <Tab $on $w={35} $pad={1}>Export<TabClose>×</TabClose></Tab>
          </Tabs>
          <PanelBody>
            <IconRow>
              <Ic n="expA" />
              <Ic n="expB" on />
              <Ic n="expC" />
              <Ic n="expD" />
              <Ic n="expE" />
            </IconRow>
            <GroupHead $mt={4} $pad={3}>File selection</GroupHead>
            <FieldRow $mt={2}>
              <FieldLabel>File type:</FieldLabel>
              <Combo $w={100}><ComboText>CFD</ComboText><ComboArrow /></Combo>
            </FieldRow>
            <FieldRow $mt={4}>
              <FieldLabel>Solver type:</FieldLabel>
              <Combo $w={100}><ComboText $tight>Nastran(Fluent) Standard for</ComboText><ComboArrow /></Combo>
            </FieldRow>
            <FieldRow $mt={5}>
              <FieldLabel>File:</FieldLabel>
              <Combo $w={225}><ComboText>C:\Users\Prueba\Desktop\Nueva carpeta (2)\Intake CFD.nas</ComboText><Ic n="folderF" s={12} /></Combo>
            </FieldRow>
            <GroupHead $mt={5} $pad={4}><Tb n="dbl" s={7} v={10} />Export options</GroupHead>
          </PanelBody>
          <BtnRow><Button>Export</Button></BtnRow>
        </LeftPanel>
        <RightArea>
          <CanvasRow>
            <SideTools><Strip items={side} start={0} col /></SideTools>
            <Viewports>
              <Viewport $w={345}>
                <LeftScene />
                <InfoLines $r={3}>Model Info: C:\Users\Prueba\Desktop\PABLO SIM\RUNNER.hm*</InfoLines>
              </Viewport>
              <Viewport $w={344} $active>
                <RightScene />
                <InfoLines $r={5}>1:  C:\Users\Prueba\Desktop\Nueva carpeta (2)\Intake CFD.nas<br />N/A : Model Step : Model Step</InfoLines>
              </Viewport>
            </Viewports>
          </CanvasRow>
          <BottomTools>
            <Strip items={bottom.map(([n, c, o]) => [n, c - 283, o])} start={0} />
          </BottomTools>
          <BottomPanel />
        </RightArea>
      </Main>
      <StatusBar>Ready</StatusBar>
      <Taskbar>
        <StartBtn><Tb n="win" s={13} /></StartBtn>
        <SearchBox>
          <SearchCircle />
          <SearchText>Escribe aquí para buscar</SearchText>
          <Tb n="mic" s={14} />
        </SearchBox>
        <TaskApps>
          <TaskApp $w={32}><Tb n="tv" s={11} /></TaskApp>
          <TaskApp $w={34}><Tb n="mail" s={14} /></TaskApp>
          <TaskApp $open><Tb n="folder" s={15} /></TaskApp>
          <TaskApp $open><Tb n="store" s={15} /></TaskApp>
          <TaskApp $open><Tb n="edge" s={15} /></TaskApp>
          <TaskApp $open><Tb n="term" s={15} /></TaskApp>
          <TaskApp $open><Tb n="app" s={15} /></TaskApp>
          <TaskApp $open $active><Tb n="hw" s={14} /></TaskApp>
        </TaskApps>
        <Tray>
          <TrayItem $w={16}><Tb n="ppl" s={12} /></TrayItem>
          <TrayItem $w={16} $ml={6}><Tb n="chev" s={10} /></TrayItem>
          <TrayItem $w={16}><Tb n="batt" s={12} /></TrayItem>
          <TrayItem $w={15}><Tb n="vol" s={11} /></TrayItem>
          <TrayItem $w={16}><Tb n="wifi" s={11} /></TrayItem>
          <TrayItem $w={14}><Tb n="drop" s={10} /></TrayItem>
          <TrayItem $w={25}>ESP</TrayItem>
          <Clock>01:21 p. m.<br />12/12/2018</Clock>
          <TrayItem $w={25}><Tb n="note" s={13} /><Badge>9</Badge></TrayItem>
        </Tray>
      </Taskbar>
    </Window>
  );
}
